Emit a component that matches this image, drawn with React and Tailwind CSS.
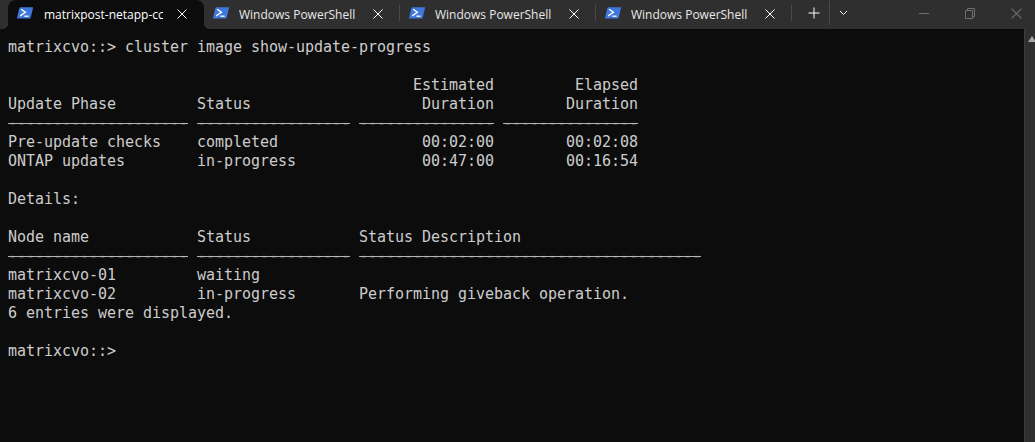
const lines = [
  "matrixcvo::> cluster image show-update-progress",
  "",
  "                                             Estimated         Elapsed",
  "Update Phase         Status                   Duration        Duration",
  "-------------------- ----------------- --------------- ---------------",
  "Pre-update checks    completed                00:02:00        00:02:08",
  "ONTAP updates        in-progress              00:47:00        00:16:54",
  "",
  "Details:",
  "",
  "Node name            Status            Status Description",
  "-------------------- ----------------- --------------------------------------",
  "matrixcvo-01         waiting",
  "matrixcvo-02         in-progress       Performing giveback operation.",
  "6 entries were displayed.",
  "",
  "matrixcvo::>",
];

function PsIcon() {
  return (
    <svg width="16" height="12" viewBox="0 0 16 12" className="mb-[3px] shrink-0">
      <path d="M3.2 0.3H15.4C15.9 0.3 16.1 0.6 16 1L13.6 10.9C13.5 11.3 13.2 11.6 12.8 11.6H0.6C0.1 11.6 -0.1 11.3 0 10.9L2.4 1C2.5 0.6 2.8 0.3 3.2 0.3Z" fill="#3f78dc" />
      <path d="M4.1 2.2L8.4 5.3L3.2 8.9" fill="none" stroke="#ffffff" strokeWidth="1.4" />
      <path d="M7.4 9.2H11.6" fill="none" stroke="#ffffff" strokeWidth="1.3" />
    </svg>
  );
}

function CloseIcon({ size = 10, color = "#ffffff", width = 1 }) {
  return (
    <svg width={size} height={size} viewBox="0 0 10 10" className="shrink-0">
      <path d="M0.5 0.5L9.5 9.5M9.5 0.5L0.5 9.5" stroke={color} strokeWidth={width} fill="none" />
    </svg>
  );
}

function Tab({ title, active }) {
  if (active) {
    return (
      <div className="relative flex h-[29px] w-[196px] shrink-0 items-center rounded-t-lg bg-[#0c0c0c] pl-[9px]">
        <div className="absolute bottom-0 -left-[6px] h-[6px] w-[6px] bg-[radial-gradient(circle_at_0_0,transparent_6px,#0c0c0c_6.5px)]" />
        <PsIcon />
        <span className="ml-[11px] w-[119px] overflow-hidden text-[12px] leading-[28px] whitespace-nowrap text-white">
          {title}
        </span>
        <span className="ml-[14px] flex items-center pb-[2px]">
          <CloseIcon />
        </span>
        <div className="absolute -right-[6px] bottom-0 h-[6px] w-[6px] bg-[radial-gradient(circle_at_100%_0,transparent_6px,#0c0c0c_6.5px)]" />
      </div>
    );
  }
  return (
    <div className="flex h-[29px] w-[196px] shrink-0 items-center pl-[9px]">
      <PsIcon />
      <span className="ml-[10px] w-[119px] overflow-hidden text-[12px] leading-[28px] whitespace-nowrap text-[#e8e8e8]">
        {title}
      </span>
      <span className="ml-[15px] flex items-center pb-[2px]">
        <CloseIcon />
      </span>
      <div className="mb-[3px] ml-auto h-[16px] w-px bg-[#4a4a4a]" />
    </div>
  );
}

function Line({ text }) {
  if (text.startsWith("---")) {
    const parts = text.split(" ");
    return (
      <div className="h-[19px] whitespace-pre">
        {parts.map((part, i) => (
          <span key={i}>
            {i > 0 ? " " : ""}
            <span className="line-through decoration-[#b4b4b4]">{part}</span>
          </span>
        ))}
      </div>
    );
  }
  return <div className="h-[19px] whitespace-pre">{text}</div>;
}

export default function App() {
  return (
    <div className="flex h-[442px] w-[1035px] flex-col overflow-hidden bg-[#0c0c0c] font-['Open_Sans',sans-serif]">
      <div className="flex h-[29px] shrink-0 items-center bg-[#2f2f2f] pl-[8px]">
        <Tab title="matrixpost-netapp-cc" active />
        <Tab title="Windows PowerShell" />
        <Tab title="Windows PowerShell" />
        <Tab title="Windows PowerShell" />
        <div className="ml-[16px] flex h-[29px] items-center">
          <svg width="12" height="12" viewBox="0 0 12 12" className="mb-[4px]">
            <path d="M6 0.5V11.5M0.5 6H11.5" stroke="#ffffff" strokeWidth="1" fill="none" />
          </svg>
          <div className="mb-[4px] ml-[9px] h-[24px] w-px bg-[#4a4a4a]" />
          <svg width="9" height="6" viewBox="0 0 9 6" className="mb-[3px] ml-[9px]">
            <path d="M1 1L4.5 4.5L8 1" stroke="#ffffff" strokeWidth="1" fill="none" />
          </svg>
        </div>
        <div className="ml-auto flex h-[29px] items-center pr-[13px]">
          <div className="mb-[3px] h-px w-[10px] bg-[#6f6f6f]" />
          <svg width="10" height="11" viewBox="0 0 10 11" className="mb-[3px] ml-[36px]">
            <path d="M0.5 2.5H7.5V10.5H0.5ZM2.5 2.5V0.5H9.5V8.5H7.5" stroke="#6f6f6f" strokeWidth="1" fill="none" />
          </svg>
          <span className="mb-[3px] ml-[36px] flex">
            <CloseIcon size={11} color="#6f6f6f" />
          </span>
        </div>
      </div>
      <div className="flex min-h-0 flex-1">
        <pre className="min-w-0 flex-1 pt-[9px] pl-[8px] font-['DejaVu_Sans_Mono',monospace] text-[15px] leading-[19px] tracking-[-0.03px] text-[#cccccc]">
          {lines.map((line, i) => (
            <Line key={i} text={line} />
          ))}
        </pre>
        <div className="w-[11px] shrink-0 border-l border-[#3c3c3c] bg-[#2f2f2f] pt-[7px] pl-[3px]">
          <div className="h-0 w-0 border-x-[4px] border-b-[6px] border-x-transparent border-b-[#a8a8a8]" />
        </div>
      </div>
    </div>
  );
}
